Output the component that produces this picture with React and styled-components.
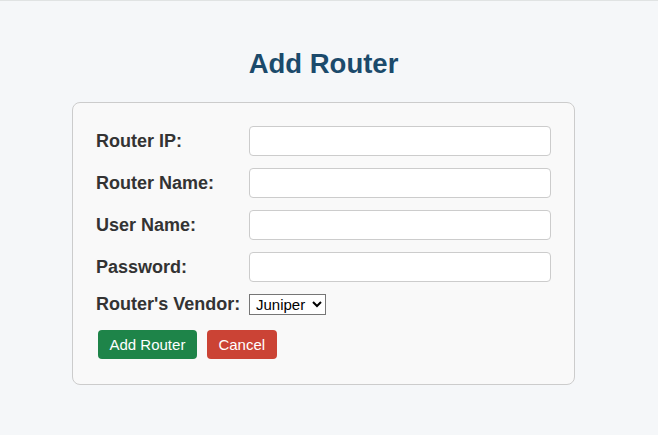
import React from "react";
import styled, { createGlobalStyle } from "styled-components";

const Global = createGlobalStyle`
  html, body { margin: 0; padding: 0; }
  body {
    background: #f5f7f9;
    font-family: "Liberation Sans", Arial, sans-serif;
    border-top: 1px solid #e0e3e3;
    min-height: 434px;
  }
`;

const Page = styled.div`
  display: flex;
  flex-direction: column;
  align-items: center;
  padding: 47px 11px 0 0;
`;

const Title = styled.h1`
  margin: 0 0 22px;
  font-size: 27.5px;
  font-weight: bold;
  color: #1b4a6b;
`;

const Card = styled.form`
  box-sizing: border-box;
  width: 503px;
  background: #f9f9f9;
  border: 1px solid #cccccc;
  border-radius: 8px;
  padding: 23px 23px 25px;
  display: flex;
  flex-direction: column;
  gap: 12px;
`;

const Row = styled.div`
  display: flex;
  align-items: center;
`;

const Label = styled.label`
  width: 153px;
  flex: none;
  font-size: 18px;
  font-weight: bold;
  color: #333333;
`;

const Input = styled.input`
  box-sizing: border-box;
  flex: 1;
  height: 30px;
  background: #ffffff;
  border: 1px solid #cccccc;
  border-radius: 4px;
  padding: 4px 8px;
  font-size: 15px;
  font-family: "Liberation Sans", Arial, sans-serif;
`;

const Select = styled.select`
  font-size: 15px;
  font-family: "Liberation Sans", Arial, sans-serif;
  color: #000;
  background: #fff;
  border: 1px solid #767676;
  border-radius: 0;
  height: 21px;
  width: 77px;
  padding: 0 0 0 2px;
`;

const Actions = styled.div`
  display: flex;
  gap: 10px;
  padding-left: 2px;
  margin-top: 3px;
`;

const Button = styled.button`
  font-family: "Liberation Sans", Arial, sans-serif;
  font-size: 15px;
  color: #ffffff;
  background: ${(p) => (p.$variant === "danger" ? "#cb4335" : "#1e8449")};
  border: none;
  border-radius: 4px;
  padding: 0 11.5px;
  height: 29px;
  cursor: pointer;
`;

export default function App() {
  return (
    <>
      <Global />
      <Page>
        <Title>Add Router</Title>
        <Card onSubmit={(e) => e.preventDefault()}>
          <Row>
            <Label>Router IP:</Label>
            <Input type="text" />
          </Row>
          <Row>
            <Label>Router Name:</Label>
            <Input type="text" />
          </Row>
          <Row>
            <Label>User Name:</Label>
            <Input type="text" />
          </Row>
          <Row>
            <Label>Password:</Label>
            <Input type="password" />
          </Row>
          <Row>
            <Label>Router's Vendor:</Label>
            <Select defaultValue="Juniper">
              <option>Juniper</option>
              <option>Cisco</option>
            </Select>
          </Row>
          <Actions>
            <Button type="submit">Add Router</Button>
            <Button type="button" $variant="danger">Cancel</Button>
          </Actions>
        </Card>
      </Page>
    </>
  );
}
